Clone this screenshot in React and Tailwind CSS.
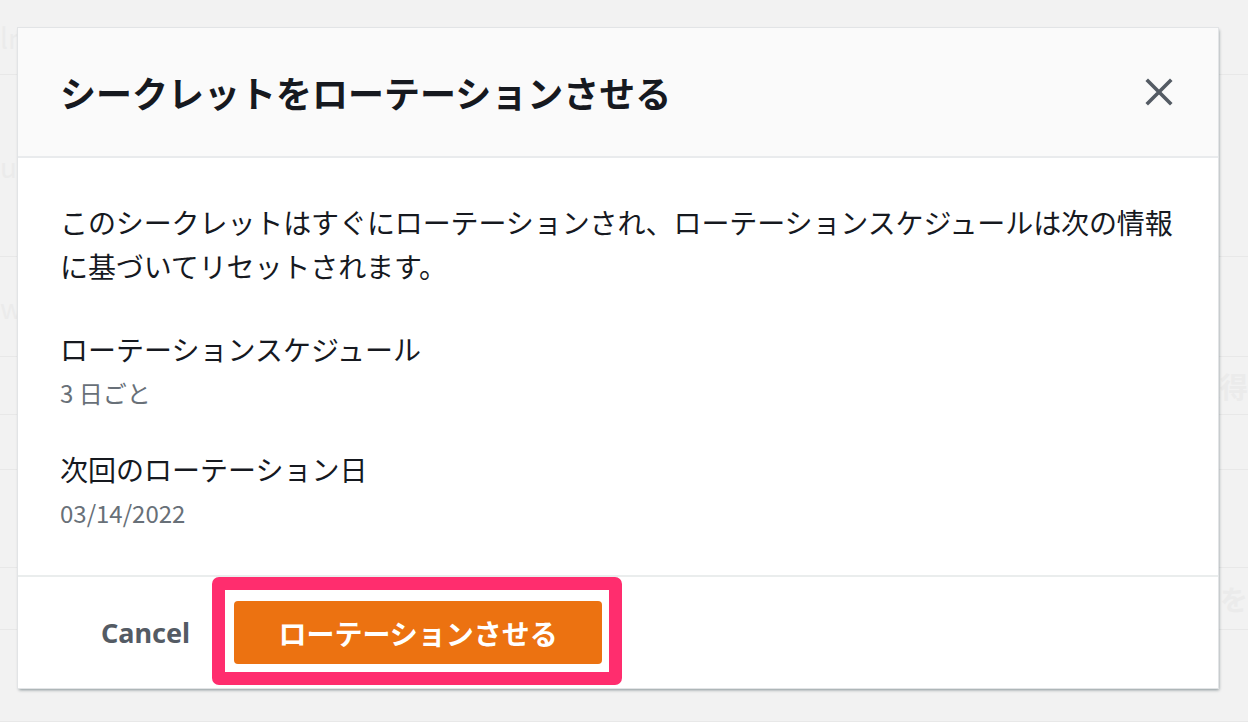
import React from 'react';

const jp = { fontFamily: '"Noto Sans CJK JP", "Noto Sans", sans-serif' };

// rows of the dimmed page that sits behind the modal
const bgRows = [
  { h: 'h-[75px]', left: 'lm', right: '' },
  { h: 'h-[182px]', left: 'uc', right: '' },
  { h: 'h-[100px]', left: 'w', right: '' },
  { h: 'h-[58px]', left: '', right: '取得' },
  { h: 'h-[55px]', left: '', right: '' },
  { h: 'h-[98px]', left: '', right: '' },
  { h: 'h-[62px]', left: '', right: 'ンを' },
  { h: 'h-[92px]', left: '', right: '' },
];

function BackgroundPage() {
  return (
    <div className="flex flex-col text-[28px] font-bold text-[#ebebeb]">
      {bgRows.map((row, i) => (
        <div key={i} className={`flex ${row.h} items-center justify-between border-b border-[#e8e8e8]`}>
          <span className="font-normal">{row.left}</span>
          <span>{row.right}</span>
        </div>
      ))}
    </div>
  );
}

export default function App() {
  return (
    <div className="relative h-[722px] w-full overflow-hidden bg-[#f2f2f2]" style={jp}>
      <BackgroundPage />

      {/* Modal overlay */}
      <div className="absolute inset-0 flex items-start pl-[18px] pt-[28px]">
        <div className="flex w-[1200px] flex-col bg-white shadow-[1px_2px_3px_rgba(0,28,36,0.45)] outline outline-1 outline-[#e2e4e6]">
          <div className="flex items-center justify-between border-b-2 border-[#e9ebed] bg-[#fafafa] py-[42px] pl-[42px] pr-[44px]">
            <h1 className="text-[36px] font-bold leading-[44px] text-[#16191f]">
              シークレットをローテーションさせる
            </h1>
            <button className="flex h-[30px] w-[30px] items-center justify-center text-[#545b64]">
              <svg width="28" height="28" viewBox="0 0 28 28" fill="none" stroke="currentColor" strokeWidth="3.6" strokeLinecap="square">
                <path d="M3 3 L25 25 M25 3 L3 25" />
              </svg>
            </button>
          </div>

          <div className="flex flex-col pl-[42px] pr-[34px] pt-[42px] pb-[40px] text-[#16191f]">
            <p className="text-[28px] leading-[44px] tracking-[-0.1px]">
              このシークレットはすぐにローテーションされ、ローテーションスケジュールは次の情報に基づいてリセットされます。
            </p>

            <div className="mt-[39px] flex flex-col">
              <div className="text-[28px] leading-[44px]">ローテーションスケジュール</div>
              <div className="text-[24px] leading-[44px] text-[#687078]">3 日ごと</div>
            </div>

            <div className="mt-[32px] flex flex-col">
              <div className="text-[28px] leading-[44px]">次回のローテーション日</div>
              <div className="text-[24px] leading-[44px] text-[#687078]">03/14/2022</div>
            </div>
          </div>

          <div className="flex h-[113px] items-center gap-[44px] border-t-2 border-[#eaeded] pl-[83px]">
            <button className="text-[27px] font-bold leading-[40px] text-[#545b64]" style={{ fontFamily: '"Noto Sans", sans-serif' }}>
              Cancel
            </button>
            <div className="relative">
              <button className="flex h-[63px] w-[368px] items-center justify-center rounded-[4px] bg-[#ec7211] text-[28px] font-bold text-white">
                ローテーションさせる
              </button>
              {/* highlight annotation */}
              <span className="pointer-events-none absolute -left-[22px] -right-[20px] -top-[24px] -bottom-[21px] rounded-[7px] border-[13px] border-[#ff2d6e]" />
            </div>
          </div>
        </div>
      </div>
    </div>
  );
}
